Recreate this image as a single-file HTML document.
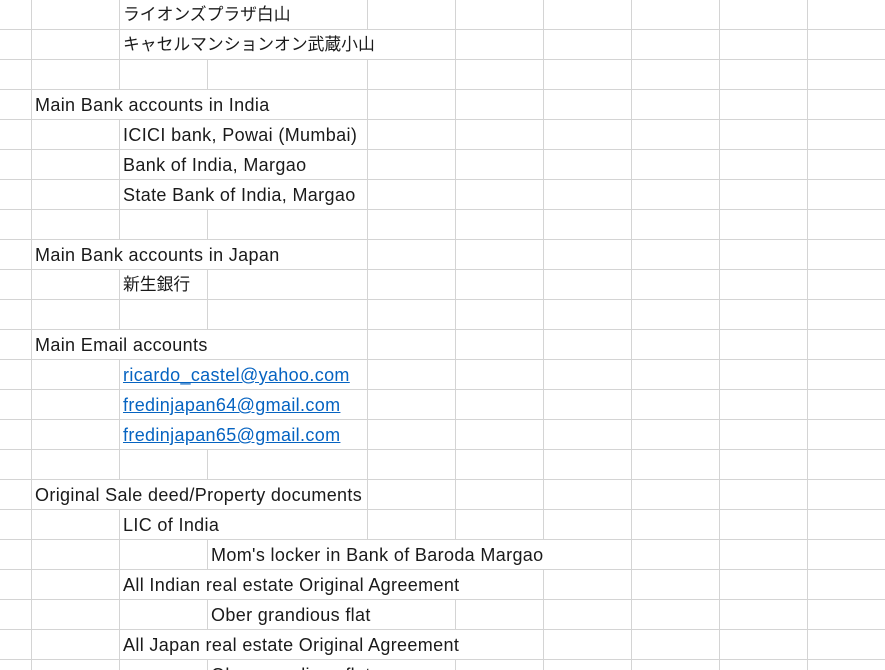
<!DOCTYPE html>
<html><head><meta charset="utf-8"><style>
html,body{margin:0;width:885px;height:670px;overflow:hidden;background:#fff;position:relative}
svg{position:absolute;left:0;top:0}
.t{position:absolute;height:29px;line-height:30px;font-family:"Liberation Sans","Noto Sans CJK JP",sans-serif;font-size:18px;letter-spacing:0.35px;color:#1a1a1a;white-space:nowrap;background:#fff;padding-right:2px}
.j{font-size:16.8px;letter-spacing:0}
.l{color:#0563c1;text-decoration:underline}
</style></head><body>
<svg width="885" height="670" id="g"></svg>
<div id="c"></div>
<script>
var cols=[31,119,207,367,455,543,631,719,807];
var hide={0:[207],1:[207,367],3:[119,207],4:[207],5:[207],6:[207],8:[119,207],11:[119],12:[207],13:[207],14:[207],16:[119,207],17:[207],18:[367,455,543],19:[207,367,455],20:[367],21:[207,367,455],22:[367]};
var s='';
for(var r=0;r<23;r++){var y0=30*r-1,y1=30*r+29;
for(var i=0;i<cols.length;i++){var x=cols[i];if(hide[r]&&hide[r].indexOf(x)>=0)continue;
s+='<line x1="'+(x+0.5)+'" y1="'+y0+'" x2="'+(x+0.5)+'" y2="'+y1+'" stroke="#d4d4d4" stroke-width="1"/>';}
s+='<line x1="0" y1="'+(y1+0.5)+'" x2="885" y2="'+(y1+0.5)+'" stroke="#d4d4d4" stroke-width="1"/>';}
document.getElementById('g').innerHTML=s;
var T=[[0,119,'ライオンズプラザ白山',0,1],[1,119,'キャセルマンションオン武蔵小山',0,1],[3,31,'Main Bank accounts in India'],[4,119,'ICICI bank, Powai (Mumbai)'],[5,119,'Bank of India, Margao'],[6,119,'State Bank of India, Margao'],[8,31,'Main Bank accounts in Japan'],[9,119,'新生銀行',0,1],[11,31,'Main Email accounts'],[12,119,'ricardo_castel@yahoo.com',1],[13,119,'fredinjapan64@gmail.com',1],[14,119,'fredinjapan65@gmail.com',1],[16,31,'Original Sale deed/Property documents'],[17,119,'LIC of India'],[18,207,'Mom\'s locker in Bank of Baroda Margao'],[19,119,'All Indian real estate Original Agreement'],[20,207,'Ober grandious flat'],[21,119,'All Japan real estate Original Agreement'],[22,207,'Ober grandious flat']];
var h='';T.forEach(function(t){h+='<div class="t'+(t[3]?' l':'')+(t[4]?' j':'')+'" style="top:'+(30*t[0])+'px;left:'+(t[1]+1)+'px;padding-left:3px">'+t[2]+'</div>';});
document.getElementById('c').innerHTML=h;
</script>
</body></html>
